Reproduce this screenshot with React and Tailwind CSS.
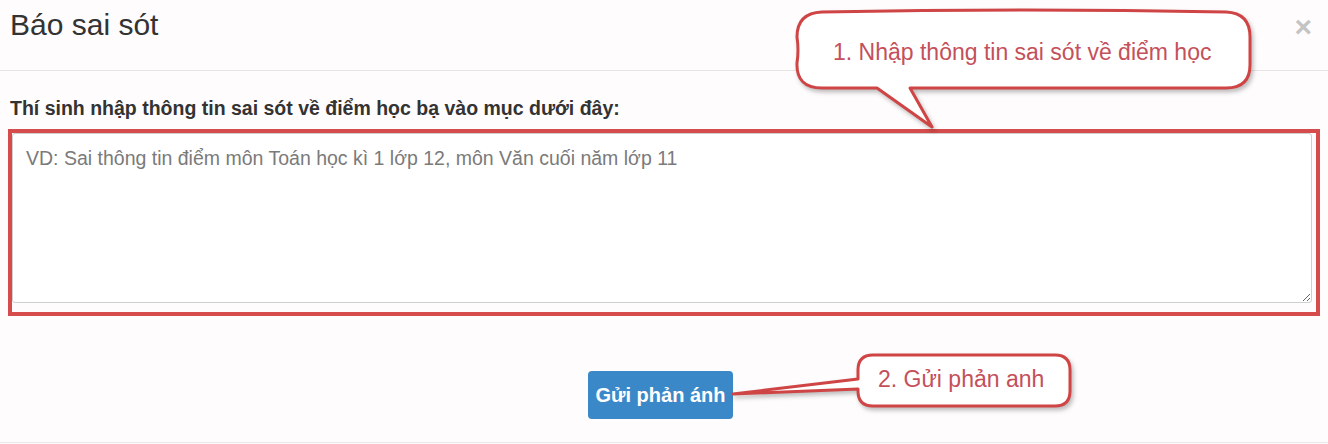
import React from "react";

export default function App() {
  return (
    <div className="relative w-[1328px] h-[444px] overflow-hidden bg-[#fefcfd] font-['Liberation_Sans',Arial,sans-serif] text-[#333]">
      {/* Header */}
      <div className="flex justify-between items-start h-[71px] border-b border-[#e5e5e5] pl-[10px] pr-[16px]">
        <h4 className="pt-[8px] text-[30px] leading-[33px] font-normal">Báo sai sót</h4>
        <button className="pt-[12px] text-[30px] leading-[30px] font-bold text-[#c4c4c4]">×</button>
      </div>

      {/* Body */}
      <div className="pt-[24px]">
        <label className="block pl-[10px] text-[19.5px] leading-[27px] font-bold">
          Thí sinh nhập thông tin sai sót về điểm học bạ vào mục dưới đây:
        </label>
        <div className="mx-[8px] mt-[7px] border-[4px] border-[#d64b4b] pr-[4px] pb-[9px]">
          <textarea
            className="block w-full h-[170px] border border-[#cfcfcf] rounded-[3px] bg-white px-[13px] pt-[11px] text-[19.5px] leading-[27px] outline-none placeholder:text-[#7a7a7a]"
            placeholder="VD: Sai thông tin điểm môn Toán học kì 1 lớp 12, môn Văn cuối năm lớp 11"
          />
        </div>
      </div>

      {/* Footer */}
      <div className="flex justify-center pr-[7px] mt-[55px] pb-[23px] border-b border-[#e8e8e8]">
        <button className="w-[145px] h-[48px] rounded-[4px] bg-[#3b88c8] text-white text-[20px] font-bold">
          Gửi phản ánh
        </button>
      </div>

      {/* Callout 1 */}
      <svg
        className="absolute left-[790px] top-[5px] drop-shadow-[2px_3px_2px_rgba(0,0,0,0.25)]"
        width="470"
        height="130"
        viewBox="0 0 470 130"
      >
        <path
          d="M32,7 Q233,3 436,7 Q460,8 460,32 L460,60 Q460,83 436,83 L120,83 L142,122 L87,83 L32,83 Q6,83 7,58 Q9,45 7,32 Q7,8 32,7 Z"
          fill="#fff"
          stroke="#cf4444"
          strokeWidth="3"
          strokeLinejoin="round"
        />
      </svg>
      <div className="absolute left-[833px] top-[39px] text-[23px] leading-[26px] text-[#c4505a]">
        1. Nhập thông tin sai sót về điểm học
      </div>

      {/* Callout 2 */}
      <svg
        className="absolute left-[728px] top-[348px] drop-shadow-[2px_3px_2px_rgba(0,0,0,0.25)]"
        width="350"
        height="66"
        viewBox="0 0 350 66"
      >
        <path
          d="M145,7 L327,7 Q342,7 342,22 L342,43 Q342,58 327,58 L145,58 Q130,58 130,43 L130,41 L5,46 L130,31 L130,22 Q130,7 145,7 Z"
          fill="#fff"
          stroke="#cf4444"
          strokeWidth="3"
          strokeLinejoin="round"
        />
      </svg>
      <div className="absolute left-[878px] top-[366px] text-[23px] leading-[26px] text-[#c4505a]">
        2. Gửi phản anh
      </div>
    </div>
  );
}
